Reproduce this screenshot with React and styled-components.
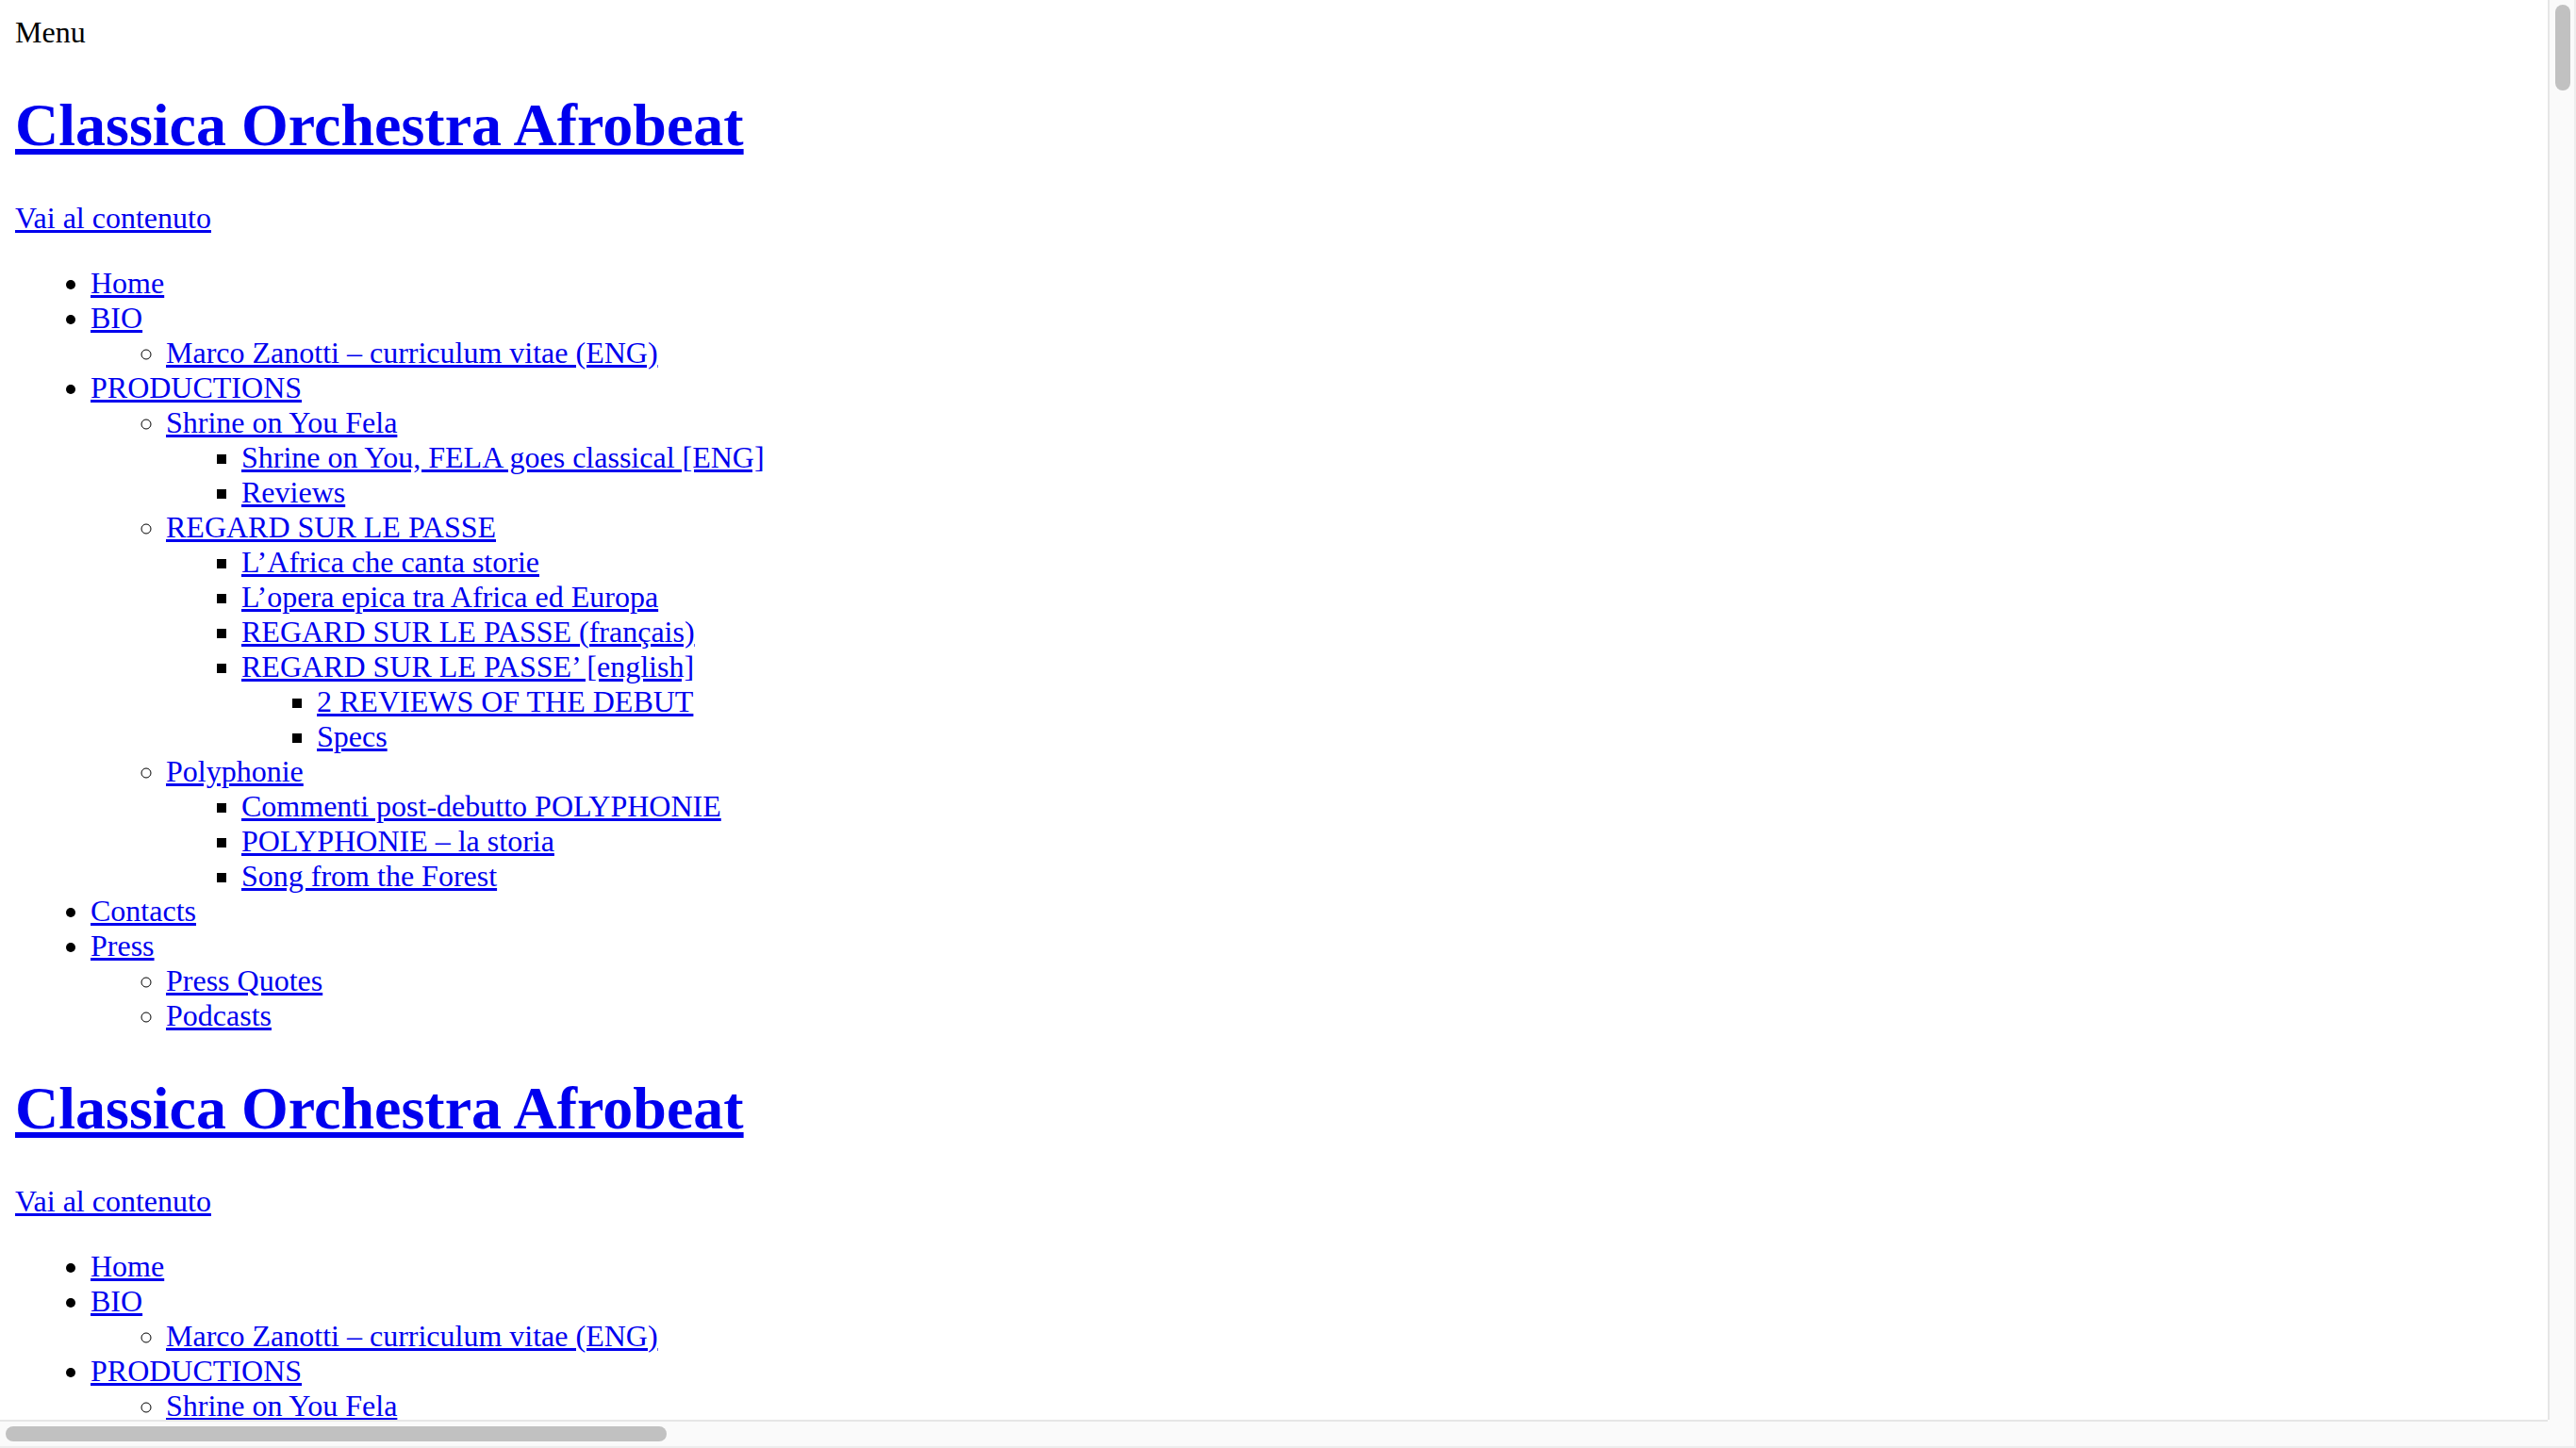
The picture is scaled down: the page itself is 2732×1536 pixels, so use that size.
import styled, { createGlobalStyle } from "styled-components";

const GlobalStyle = createGlobalStyle`
  html,
  body {
    margin: 0;
    padding: 0;
    background: #fff;
    overflow: hidden;
  }
  body {
    font-family: "Liberation Serif", "Times New Roman", serif;
  }
`;

// browser window: page area plus the two classic scrollbars
const Window = styled.div`
  display: grid;
  grid-template-columns: 1fr 30px;
  grid-template-rows: 1fr 30px;
  width: 100vw;
  height: 100vh;
  overflow: hidden;
`;

const Viewport = styled.div`
  overflow: hidden;
  padding: 16px;
  font-size: 32px;
  line-height: 37px;
  color: #000;
  background: #fff;
`;

const VTrack = styled.div`
  box-sizing: border-box;
  background: #fafafa;
  border-left: 2px solid #e6e6e6;
  border-right: 2px solid #ededed;
  padding: 5px 4px 0 6px;
`;

const HTrack = styled.div`
  box-sizing: border-box;
  background: #fafafa;
  border-top: 2px solid #e6e6e6;
  border-bottom: 2px solid #ededed;
  padding: 5px 0 0 6px;
`;

const Thumb = styled.div`
  background: #c1c1c1;
  border-radius: 8px;
  width: ${(p) => p.$w};
  height: ${(p) => p.$h};
`;

const Corner = styled.div`
  box-sizing: border-box;
  background: #fafafa;
  border-right: 2px solid #ededed;
  border-bottom: 2px solid #ededed;
`;

const MenuToggle = styled.div`
  margin: 0;
`;

const Header = styled.header``;

const SiteTitle = styled.h1`
  font-size: 64px;
  line-height: 74px;
  font-weight: bold;
  margin: 42.88px 0;
`;

const SkipPara = styled.p`
  margin: 32px 0;
`;

const Link = styled.a`
  color: #0000ee;
  text-decoration: underline;
  cursor: pointer;
`;

const bullets = ["disc", "circle", "square", "square"];

const List = styled.ul`
  margin: ${(p) => (p.$depth === 0 ? "32px 0" : "0")};
  padding-left: 80px;
  list-style-type: ${(p) => bullets[Math.min(p.$depth, 3)]};
`;

const Item = styled.li``;

const menu = [
  { label: "Home" },
  { label: "BIO", children: [{ label: "Marco Zanotti – curriculum vitae (ENG)" }] },
  {
    label: "PRODUCTIONS",
    children: [
      {
        label: "Shrine on You Fela",
        children: [
          { label: "Shrine on You, FELA goes classical [ENG]" },
          { label: "Reviews" },
        ],
      },
      {
        label: "REGARD SUR LE PASSE",
        children: [
          { label: "L’Africa che canta storie" },
          { label: "L’opera epica tra Africa ed Europa" },
          { label: "REGARD SUR LE PASSE (français)" },
          {
            label: "REGARD SUR LE PASSE’ [english]",
            children: [{ label: "2 REVIEWS OF THE DEBUT" }, { label: "Specs" }],
          },
        ],
      },
      {
        label: "Polyphonie",
        children: [
          { label: "Commenti post-debutto POLYPHONIE" },
          { label: "POLYPHONIE – la storia" },
          { label: "Song from the Forest" },
        ],
      },
    ],
  },
  { label: "Contacts" },
  { label: "Press", children: [{ label: "Press Quotes" }, { label: "Podcasts" }] },
];

function NavTree({ items, depth = 0 }) {
  return (
    <List $depth={depth}>
      {items.map((item) => (
        <Item key={item.label}>
          <Link href="#">{item.label}</Link>
          {item.children ? <NavTree items={item.children} depth={depth + 1} /> : null}
        </Item>
      ))}
    </List>
  );
}

function SiteHeader() {
  return (
    <Header>
      <SiteTitle>
        <Link href="#">Classica Orchestra Afrobeat</Link>
      </SiteTitle>
      <SkipPara>
        <Link href="#content">Vai al contenuto</Link>
      </SkipPara>
      <nav>
        <NavTree items={menu} />
      </nav>
    </Header>
  );
}

export default function App() {
  return (
    <>
      <GlobalStyle />
      <Window>
        <Viewport>
          <MenuToggle>Menu</MenuToggle>
          <SiteHeader />
          <SiteHeader />
        </Viewport>
        <VTrack>
          <Thumb $w="16px" $h="91px" />
        </VTrack>
        <HTrack>
          <Thumb $w="701px" $h="16px" />
        </HTrack>
        <Corner />
      </Window>
    </>
  );
}
